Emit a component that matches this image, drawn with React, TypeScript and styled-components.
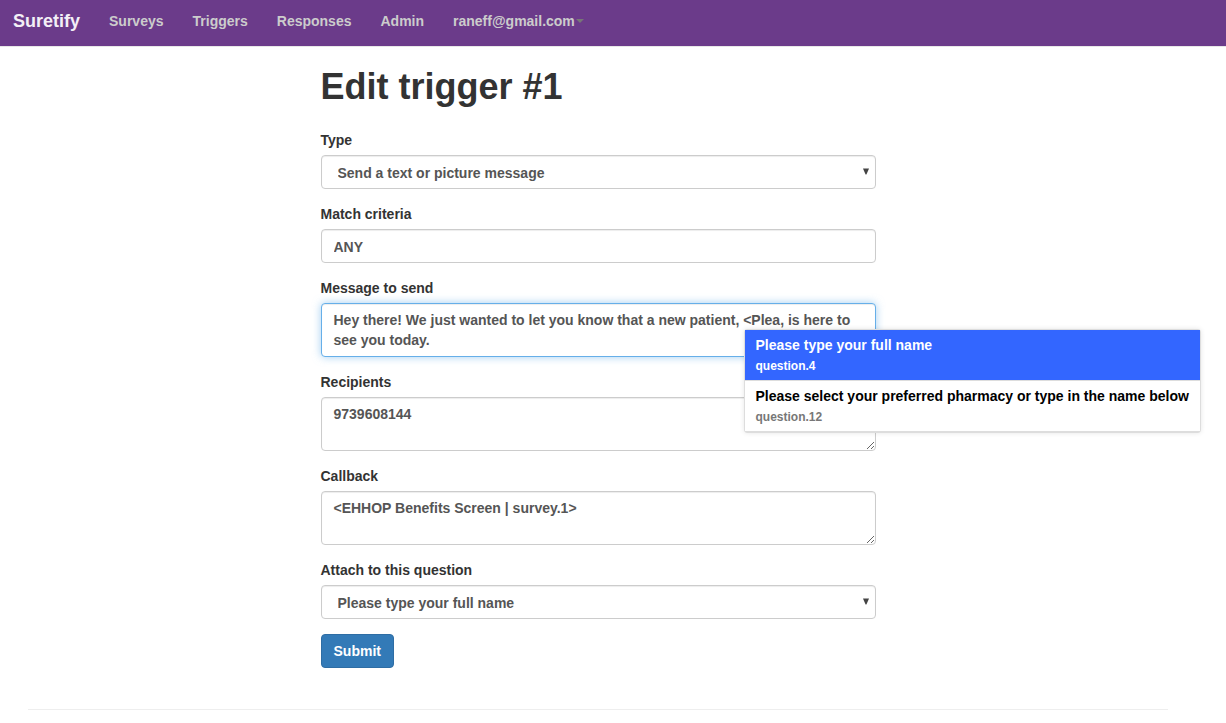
import React from "react";
import styled, { createGlobalStyle, css } from "styled-components";

const GlobalStyle = createGlobalStyle`
  *, *::before, *::after {
    box-sizing: border-box;
  }
  body {
    margin: 0;
    background: #fff;
    color: #333;
    font-family: "Helvetica Neue", Helvetica, "Liberation Sans", Arial, sans-serif;
    font-size: 14px;
    font-weight: 700;
    line-height: 20px;
  }
`;

const Navbar = styled.nav`
  display: flex;
  flex-wrap: wrap;
  align-items: center;
  gap: 0 29px;
  min-height: 47px;
  padding: 0 13px 4px;
  background: #6b3b8a;
  border-bottom: 1px solid #e7e7e7;
`;

const Brand = styled.a`
  color: #f3eff6;
  font-size: 18px;
  text-decoration: none;
`;

const NavList = styled.ul`
  display: flex;
  flex-wrap: wrap;
  gap: 0 29px;
  margin: 0;
  padding: 0;
  list-style: none;
`;

const NavLink = styled.a`
  display: flex;
  align-items: center;
  gap: 1px;
  color: #ccc;
  text-decoration: none;
`;

const Caret = styled.span`
  border-top: 4px solid #777;
  border-right: 4px solid transparent;
  border-left: 4px solid transparent;
`;

const Container = styled.div`
  max-width: 1196px;
  padding: 20px 28px;
`;

const Column = styled.main`
  width: 50%;
  min-width: 320px;
  max-width: 555px;
  margin: 0 auto;
`;

const Title = styled.h1`
  margin: 0 0 23px;
  font-size: 36px;
  line-height: 40px;
`;

const Form = styled.form`
  display: flex;
  flex-direction: column;
  align-items: flex-start;
  gap: 15px;
`;

const Group = styled.div`
  position: relative;
  display: flex;
  flex-direction: column;
  gap: 5px;
  width: 100%;
`;

const control = css`
  display: block;
  width: 100%;
  margin: 0;
  padding: 6px 12px;
  border: 1px solid #ccc;
  border-radius: 4px;
  outline: 0;
  background: #fff;
  box-shadow: inset 0 1px 1px rgba(0, 0, 0, 0.075);
  color: #555;
  font: inherit;
`;

const Input = styled.input`
  ${control}
  height: 34px;
  padding: 7px 12px 5px;
`;

const TextArea = styled.textarea<{ $active?: boolean }>`
  ${control}
  overflow: auto;
  ${(p) =>
    p.$active &&
    css`
      border-color: #66afe9;
      box-shadow: inset 0 1px 1px rgba(0, 0, 0, 0.075), 0 0 8px rgba(102, 175, 233, 0.6);
    `}
`;

const SelectWrap = styled.div`
  position: relative;
`;

const Select = styled.select`
  ${control}
  height: 34px;
  padding: 7px 24px 5px 16px;
  appearance: none;
`;

const Arrow = styled.svg`
  position: absolute;
  top: 13px;
  right: 7px;
  pointer-events: none;
`;

const Submit = styled.button`
  padding: 6px 12px;
  border: 1px solid #2e6da4;
  border-radius: 4px;
  background: #337ab7;
  color: #fff;
  font: inherit;
  cursor: pointer;
`;

const Suggestions = styled.ul`
  position: absolute;
  z-index: 10;
  top: 51px;
  left: 423px;
  min-width: 457px;
  margin: 0;
  padding: 0;
  border: 1px solid #ddd;
  border-radius: 3px;
  background: #fff;
  box-shadow: 0 0 5px rgba(0, 0, 0, 0.1);
  color: #000;
  list-style: none;
  white-space: nowrap;
`;

const Suggestion = styled.li<{ $current?: boolean }>`
  padding: 5px 11px 4px;
  border-bottom: 1px solid #ddd;
  background: ${(p) => (p.$current ? "#3366ff" : "#fff")};
  color: ${(p) => (p.$current ? "#fff" : "#000")};
  cursor: pointer;
`;

const SuggestionId = styled.small<{ $current?: boolean }>`
  display: block;
  padding-top: 1px;
  color: ${(p) => (p.$current ? "#fff" : "#777")};
  font-size: 12px;
`;

const Divider = styled.hr`
  margin: 41px 0 20px;
  border: 0;
  border-top: 1px solid #eee;
`;

const links = ["Surveys", "Triggers", "Responses", "Admin"];

const suggestions = [
  { title: "Please type your full name", id: "question.4" },
  { title: "Please select your preferred pharmacy or type in the name below", id: "question.12" },
];

function SelectField({ id, label, value }: { id: string; label: string; value: string }) {
  return (
    <Group>
      <label htmlFor={id}>{label}</label>
      <SelectWrap>
        <Select id={id} defaultValue={value}>
          <option>{value}</option>
        </Select>
        <Arrow width="6" height="7" viewBox="0 0 6 7" aria-hidden="true">
          <path d="M0 0.5H6L3.4 6.5H2.6Z" fill="#444" />
        </Arrow>
      </SelectWrap>
    </Group>
  );
}

export default function App() {
  return (
    <>
      <GlobalStyle />
      <Navbar>
        <Brand href="#">Suretify</Brand>
        <NavList>
          {links.map((name) => (
            <li key={name}>
              <NavLink href="#">{name}</NavLink>
            </li>
          ))}
          <li>
            <NavLink href="#">
              raneff@gmail.com
              <Caret />
            </NavLink>
          </li>
        </NavList>
      </Navbar>
      <Container>
        <Column>
          <Title>Edit trigger #1</Title>
          <Form onSubmit={(e) => e.preventDefault()}>
            <SelectField id="type" label="Type" value="Send a text or picture message" />
            <Group>
              <label htmlFor="criteria">Match criteria</label>
              <Input id="criteria" type="text" defaultValue="ANY" />
            </Group>
            <Group>
              <label htmlFor="message">Message to send</label>
              <TextArea
                id="message"
                rows={2}
                $active
                spellCheck={false}
                defaultValue="Hey there! We just wanted to let you know that a new patient, <Plea, is here to see you today."
              />
              <Suggestions>
                {suggestions.map((s, i) => (
                  <Suggestion key={s.id} $current={i === 0}>
                    {s.title}
                    <SuggestionId $current={i === 0}>{s.id}</SuggestionId>
                  </Suggestion>
                ))}
              </Suggestions>
            </Group>
            <Group>
              <label htmlFor="recipients">Recipients</label>
              <TextArea id="recipients" rows={2} defaultValue="9739608144" />
            </Group>
            <Group>
              <label htmlFor="callback">Callback</label>
              <TextArea
                id="callback"
                rows={2}
                spellCheck={false}
                defaultValue="<EHHOP Benefits Screen | survey.1>"
              />
            </Group>
            <SelectField id="question" label="Attach to this question" value="Please type your full name" />
            <Submit type="submit">Submit</Submit>
          </Form>
        </Column>
        <Divider />
      </Container>
    </>
  );
}
